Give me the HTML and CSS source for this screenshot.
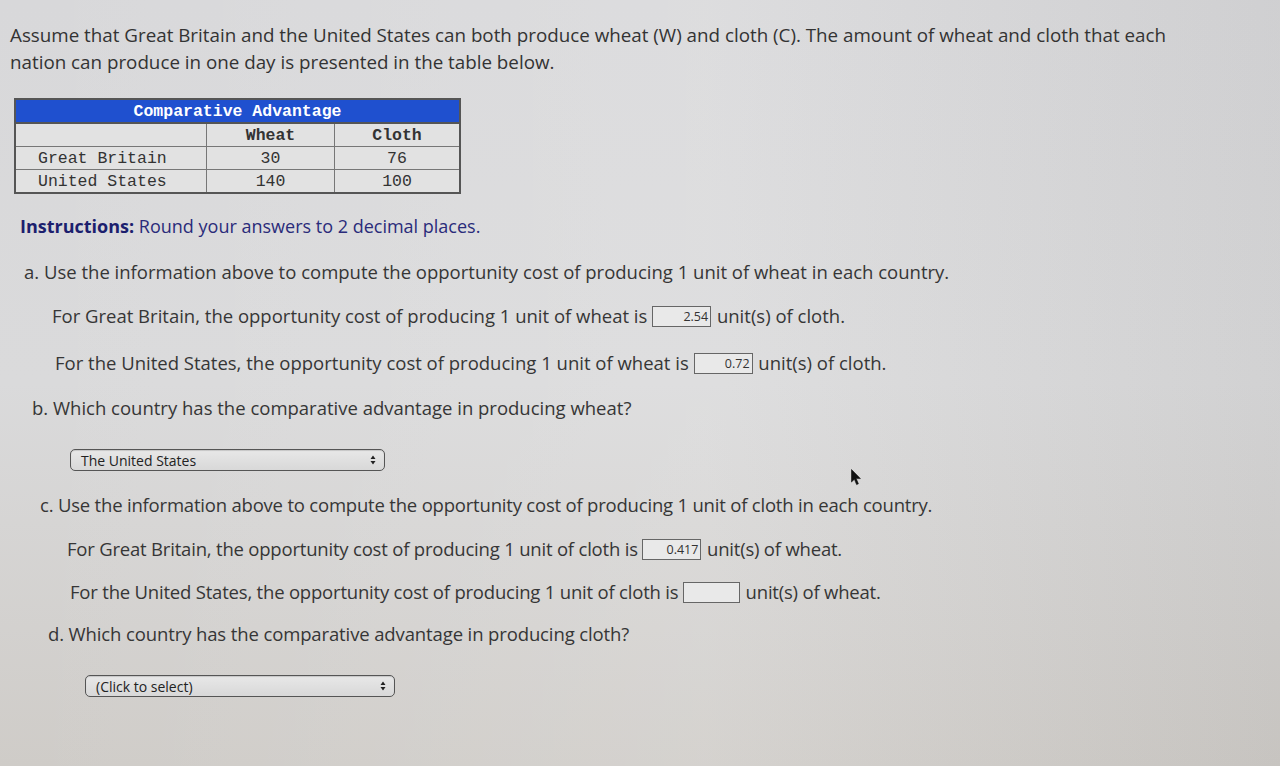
FILE: index.html
```html
<!DOCTYPE html>
<html>
<head>
<meta charset="utf-8">
<link rel="stylesheet" href="styles.css">
</head>
<body>
<div class="page">
  <p class="intro">Assume that Great Britain and the United States can both produce wheat (W) and cloth (C). The amount of wheat and cloth that each nation can produce in one day is presented in the table below.</p>

  <table class="ca">
    <tr><th class="title" colspan="3">Comparative Advantage</th></tr>
    <tr class="heads"><td class="c1"></td><td class="c2">Wheat</td><td class="c3">Cloth</td></tr>
    <tr><td class="name">Great Britain</td><td class="num">30</td><td class="num">76</td></tr>
    <tr><td class="name">United States</td><td class="num">140</td><td class="num">100</td></tr>
  </table>

  <p class="instr"><b>Instructions:</b> Round your answers to 2 decimal places.</p>

  <p class="q qa">a. Use the information above to compute the opportunity cost of producing 1 unit of wheat in each country.</p>
  <p class="line l1">For Great Britain, the opportunity cost of producing 1 unit of wheat is <span class="box b1">2.54</span> unit(s) of cloth.</p>
  <p class="line l2">For the United States, the opportunity cost of producing 1 unit of wheat is <span class="box b2">0.72</span> unit(s) of cloth.</p>
  <p class="q qb">b. Which country has the comparative advantage in producing wheat?</p>
  <div class="sel s1"><span>The United States</span><svg class="arr" width="6" height="10" viewBox="0 0 6 10"><path d="M3 0.5 L5.5 4 H0.5 Z M3 9.5 L5.5 6 H0.5 Z" fill="#222"/></svg></div>

  <p class="q qc">c. Use the information above to compute the opportunity cost of producing 1 unit of cloth in each country.</p>
  <p class="line l3">For Great Britain, the opportunity cost of producing 1 unit of cloth is <span class="box b3">0.417</span> unit(s) of wheat.</p>
  <p class="line l4">For the United States, the opportunity cost of producing 1 unit of cloth is <span class="box b4"></span> unit(s) of wheat.</p>
  <p class="q qd">d. Which country has the comparative advantage in producing cloth?</p>
  <div class="sel s2"><span>(Click to select)</span><svg class="arr" width="6" height="10" viewBox="0 0 6 10"><path d="M3 0.5 L5.5 4 H0.5 Z M3 9.5 L5.5 6 H0.5 Z" fill="#222"/></svg></div>

  <svg class="cursor" width="11" height="17" viewBox="0 0 11 17"><path d="M0.5 0.5 L0.5 13 L3.4 10.2 L5.6 15.6 L7.4 14.8 L5.2 9.6 L9.4 9.6 Z" fill="#111" stroke="#111" stroke-width="0.6" stroke-linejoin="round"/></svg>
</div>
</body>
</html>
```
FILE: styles.css
```css
html, body {
  margin: 0;
  padding: 0;
}
body {
  width: 1280px;
  height: 766px;
  overflow: hidden;
  background:
    linear-gradient(90deg, rgba(255,255,255,0) 0%, rgba(255,255,255,0.12) 55%, rgba(0,0,0,0.04) 100%),
    linear-gradient(180deg, #d8d8da 0%, #dadadb 50%, #cfccc8 100%);
  font-family: "Open Sans", "Liberation Sans", sans-serif;
  color: #363636;
}
.page {
  position: relative;
  padding: 22px 0 0 10px;
  height: 744px;
}
p { margin: 0; }
.intro {
  font-size: 18.8px;
  line-height: 27px;
  width: 1200px;
  color: #333;
}
.ca {
  margin: 22px 0 0 4px;
  border-collapse: collapse;
  font-family: "Liberation Mono", "DejaVu Sans Mono", monospace;
  font-size: 16.5px;
  color: #333;
  border: 2px solid #555;
  background: #e2e2e2;
}
.ca th.title {
  background: #1f50cf;
  color: #fff;
  font-weight: bold;
  height: 22px;
  padding: 0;
  border-bottom: 2px solid #555;
  line-height: 21px;
}
.ca td {
  border: 1px solid #777;
  height: 22px;
  padding: 0;
  line-height: 21px;
}
.c1 { width: 190px; }
.c2 { width: 127px; text-align: center; font-weight: bold; }
.c3 { width: 124px; text-align: center; font-weight: bold; }
.name { padding-left: 22px !important; }
.num { text-align: center; }
.instr {
  margin: 20px 0 0 10px;
  font-size: 18px;
  line-height: 24px;
  color: #2a2b7a;
}
.instr b { color: #1c1f6e; }
.q, .line {
  font-size: 18.5px;
  line-height: 24px;
}
.qa { margin: 22px 0 0 14px; }
.l1 { margin: 20px 0 0 42px; }
.l2 { margin: 23px 0 0 45px; }
.qb { margin: 21px 0 0 22px; }
.qc { margin: 22px 0 0 30px; letter-spacing: -0.2px; }
.l3 { margin: 20px 0 0 57px; letter-spacing: -0.2px; }
.l4 { margin: 19px 0 0 60px; letter-spacing: -0.2px; }
.qd { margin: 18px 0 0 38px; letter-spacing: -0.12px; }
.box {
  display: inline-block;
  vertical-align: 2px;
  height: 21px;
  line-height: 19px;
  border: 1px solid #666;
  background: #e9e9e9;
  font-size: 12.5px;
  letter-spacing: 0;
  text-align: right;
  padding-right: 2px;
  box-sizing: border-box;
  color: #333;
  margin-right: 1px;
}
.b1 { width: 59px; }
.b2 { width: 59px; }
.b3 { width: 59px; }
.b4 { width: 57px; vertical-align: -4px; }
.sel {
  display: flex;
  align-items: center;
  justify-content: space-between;
  box-sizing: border-box;
  height: 22px;
  border: 1.5px solid #555;
  border-radius: 5px;
  background: linear-gradient(#e8e8e8, #d8d8d8);
  font-size: 14px;
  color: #222;
  padding: 0 8px 0 10px;
  box-shadow: inset 0 1px 1px rgba(0,0,0,0.15);
}
.s1 { width: 315px; margin: 29px 0 0 60px; }
.s2 { width: 310px; margin: 29px 0 0 75px; }
.cursor {
  position: absolute;
  left: 851px;
  top: 469px;
}
```
